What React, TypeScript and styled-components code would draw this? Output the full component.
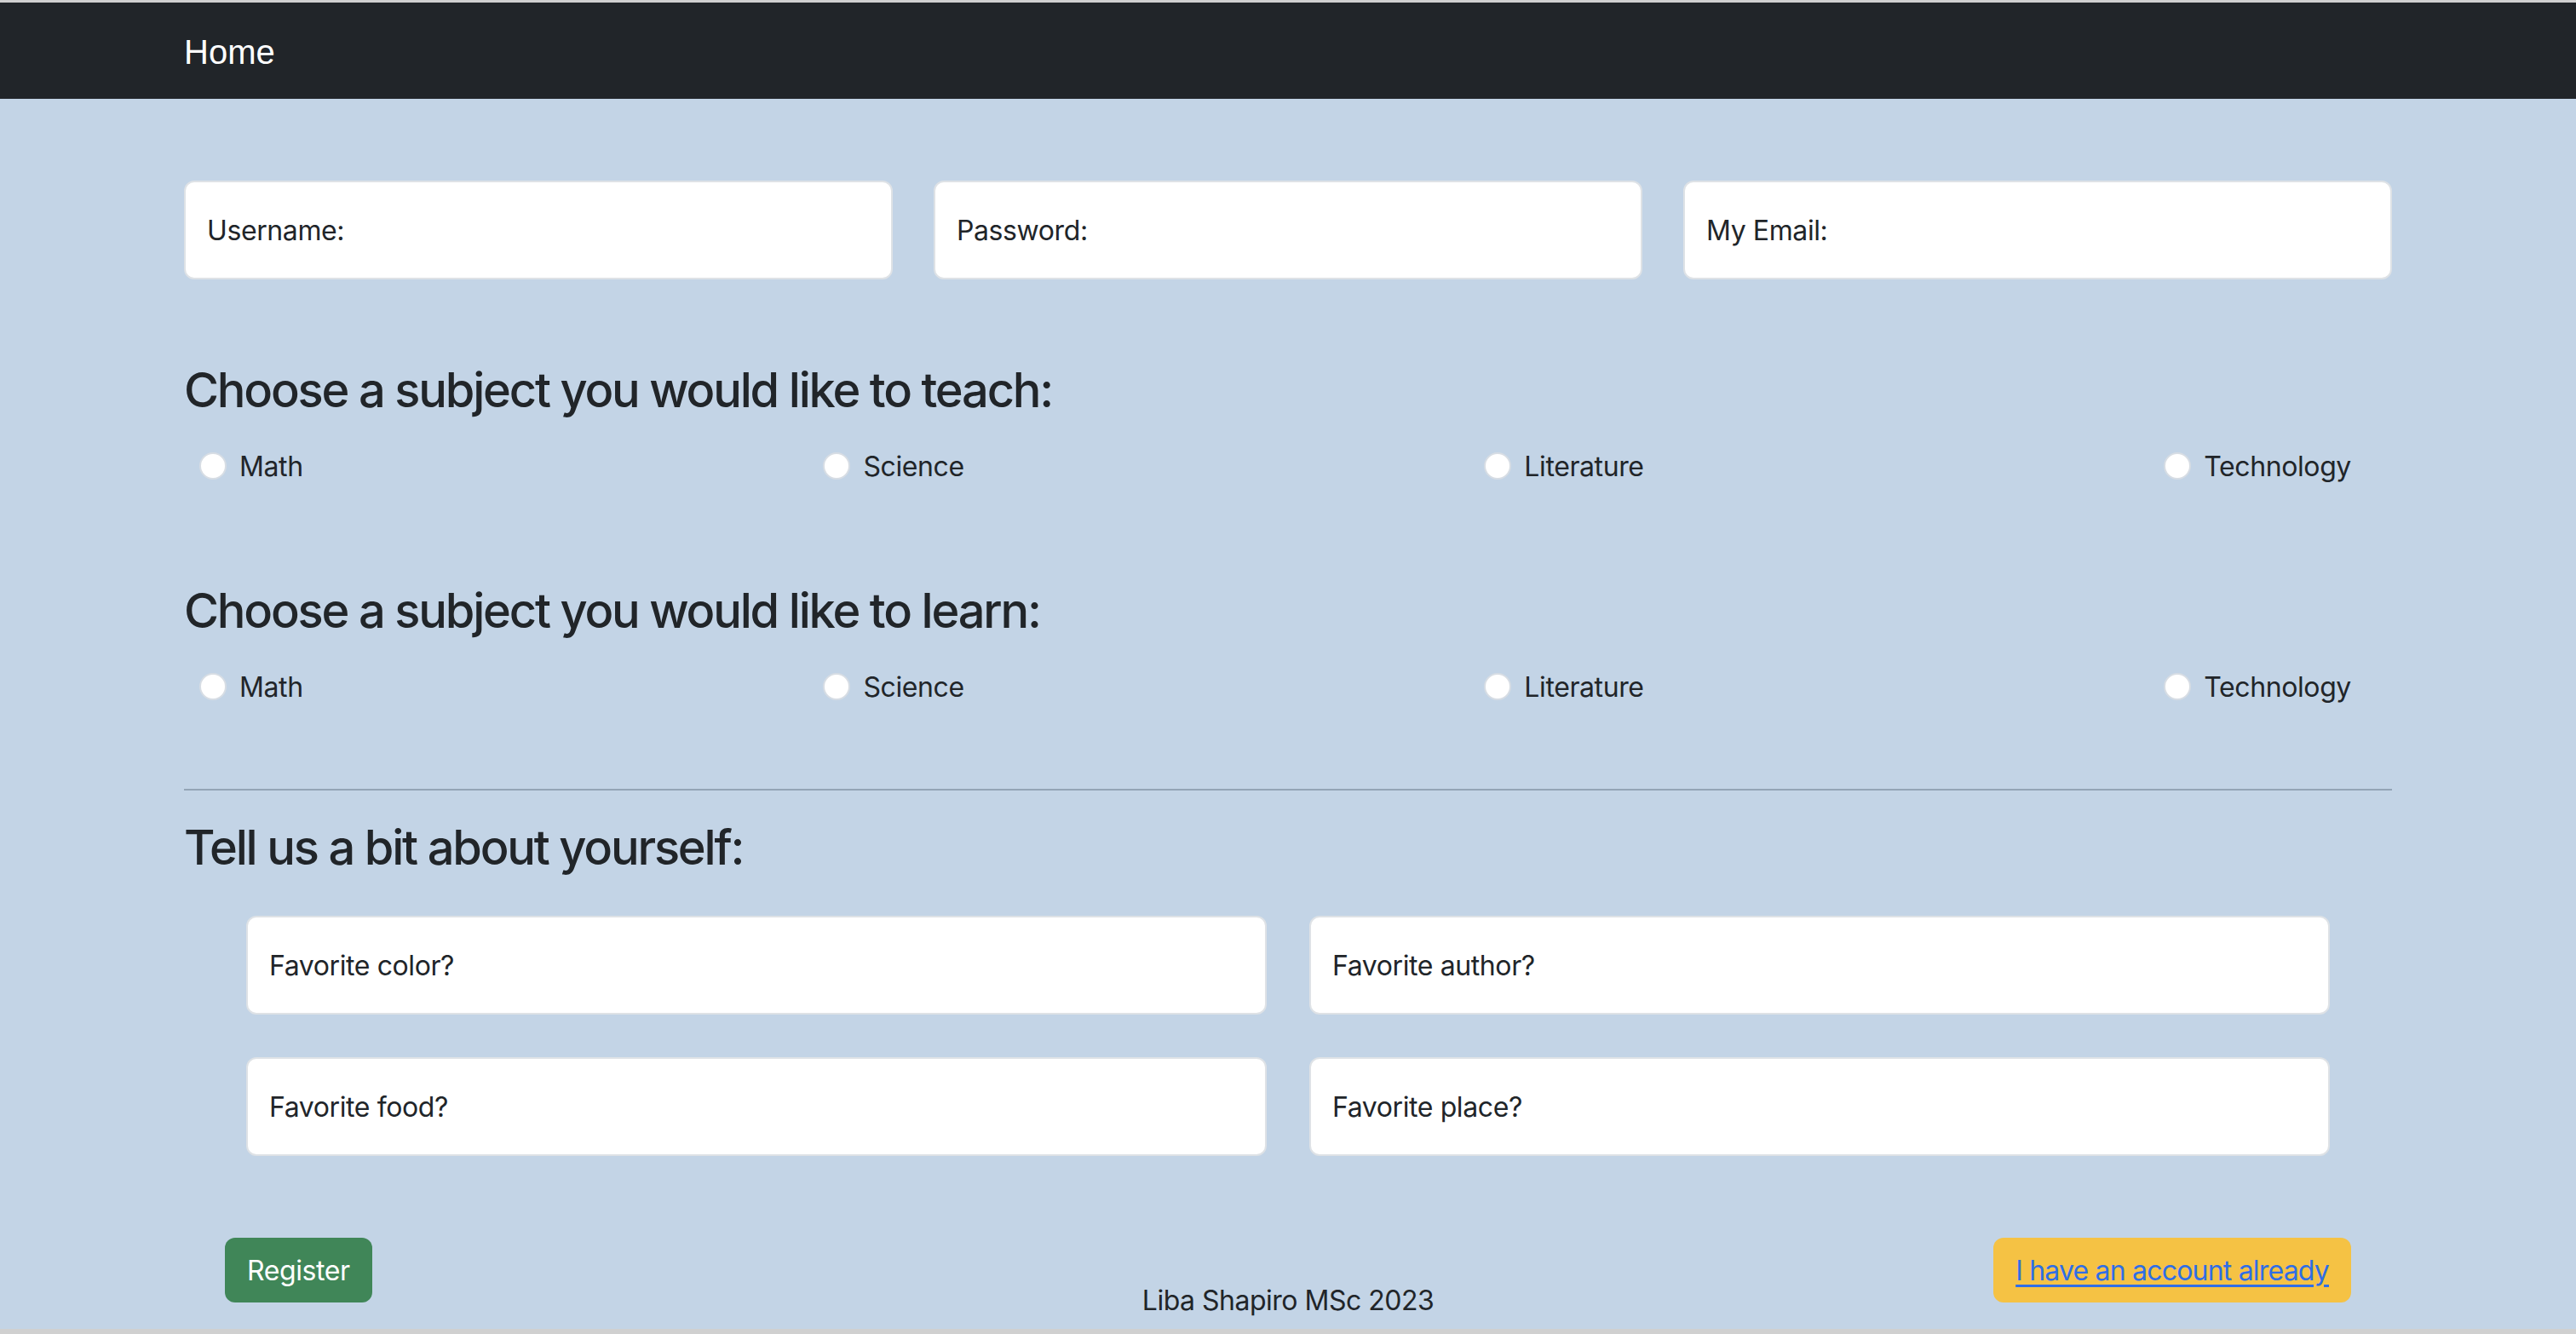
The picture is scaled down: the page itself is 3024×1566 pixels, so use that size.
import React from "react";
import styled, { createGlobalStyle } from "styled-components";

const GlobalStyle = createGlobalStyle`
  html, body { margin: 0; padding: 0; }
  body {
    font-family: Inter, "Noto Sans", sans-serif;
    color: #212529;
    background: #cfcfcf;
    letter-spacing: -0.4px;
  }
  * { box-sizing: border-box; }
`;

const Frame = styled.div`
  height: 100vh;
  display: flex;
  flex-direction: column;
  padding: 3px 0 6px;
  background: #d0d0d0;
`;

const Page = styled.div`
  flex: 1;
  overflow: hidden;
  background: #c3d4e6;
  display: flex;
  flex-direction: column;
`;

const NavBar = styled.nav`
  height: 113px;
  background: #212529;
  display: flex;
  align-items: center;
`;

const Container = styled.div`
  width: 2592px;
  margin: 0 auto;
`;

const Brand = styled.a`
  display: inline-block;
  padding-top: 3px;
  font-family: "Liberation Sans", Arial, sans-serif;
  font-size: 40px;
  letter-spacing: 0;
  color: #ffffff;
  text-decoration: none;
`;

const Main = styled(Container)`
  display: flex;
  flex-direction: column;
`;

const FieldRow = styled.div`
  display: grid;
  grid-template-columns: repeat(3, 1fr);
  gap: 48px;
  margin-top: 96px;
`;

const Field = styled.div`
  height: 116px;
  background: #ffffff;
  border: 2px solid #dee2e6;
  border-radius: 12px;
  display: flex;
  align-items: center;
  padding: 0 25px;
  font-size: 32px;
  color: #212529;
`;

const Heading = styled.h3<{ $top: number }>`
  margin: ${(p) => p.$top}px 0 0;
  font-size: 56px;
  line-height: 68px;
  font-weight: 500;
  letter-spacing: -2.2px;
  color: #212529;
`;

const RadioRow = styled.div`
  display: flex;
  justify-content: space-between;
  margin-top: 31px;
  padding: 0 16px 0 18px;
`;

const RadioItem = styled.label`
  display: flex;
  align-items: center;
  gap: 15px;
  height: 48px;
  font-size: 32px;
  margin-right: 32px;
`;

const RadioCircle = styled.span`
  width: 32px;
  height: 32px;
  border-radius: 50%;
  background: #ffffff;
  border: 2px solid #d7dde4;
`;

const Divider = styled.hr`
  margin: 96px 0 0;
  border: 0;
  height: 2px;
  background: #94a5b6;
`;

const FavGrid = styled.div`
  display: grid;
  grid-template-columns: 1fr 1fr;
  column-gap: 50px;
  row-gap: 50px;
  padding: 0 73px;
  margin-top: 46px;
`;

const ActionRow = styled.div`
  display: grid;
  grid-template-columns: 1fr auto 1fr;
  align-items: start;
  padding: 0 48px;
  margin-top: 96px;
`;

const Button = styled.button<{ $variant: "success" | "warning" }>`
  justify-self: ${(p) => (p.$variant === "success" ? "start" : "end")};
  height: 76px;
  padding: 0 26px;
  border: 0;
  border-radius: 12px;
  font-family: inherit;
  font-size: 32px;
  letter-spacing: ${(p) => (p.$variant === "success" ? "-0.4px" : "-0.8px")};
  background: ${(p) => (p.$variant === "success" ? "#408658" : "#f5c244")};
  color: ${(p) => (p.$variant === "success" ? "#ffffff" : "#2f6ee6")};
`;

const AccountLink = styled.a`
  color: #2f6ee6;
  text-decoration: underline;
  text-underline-offset: 5px;
  text-decoration-thickness: 3px;
`;

const Footer = styled.div`
  margin-top: 50px;
  font-size: 32px;
  line-height: 48px;
  letter-spacing: -0.5px;
  color: #212529;
`;

const subjects = ["Math", "Science", "Literature", "Technology"];

function SubjectRadios({ name }: { name: string }) {
  return (
    <RadioRow>
      {subjects.map((s) => (
        <RadioItem key={name + s}>
          <RadioCircle />
          {s}
        </RadioItem>
      ))}
    </RadioRow>
  );
}

export default function App() {
  return (
    <>
      <GlobalStyle />
      <Frame>
        <Page>
          <NavBar>
            <Container>
              <Brand>Home</Brand>
            </Container>
          </NavBar>
          <Main>
            <FieldRow>
              <Field>Username:</Field>
              <Field>Password:</Field>
              <Field>My Email:</Field>
            </FieldRow>
            <Heading $top={96}>Choose a subject you would like to teach:</Heading>
            <SubjectRadios name="teach" />
            <Heading $top={112}>Choose a subject you would like to learn:</Heading>
            <SubjectRadios name="learn" />
            <Divider />
            <Heading $top={33}>Tell us a bit about yourself:</Heading>
            <FavGrid>
              <Field>Favorite color?</Field>
              <Field>Favorite author?</Field>
              <Field>Favorite food?</Field>
              <Field>Favorite place?</Field>
            </FavGrid>
            <ActionRow>
              <Button $variant="success">Register</Button>
              <Footer>Liba Shapiro MSc 2023</Footer>
              <Button $variant="warning">
                <AccountLink>I have an account already</AccountLink>
              </Button>
            </ActionRow>
          </Main>
        </Page>
      </Frame>
    </>
  );
}
